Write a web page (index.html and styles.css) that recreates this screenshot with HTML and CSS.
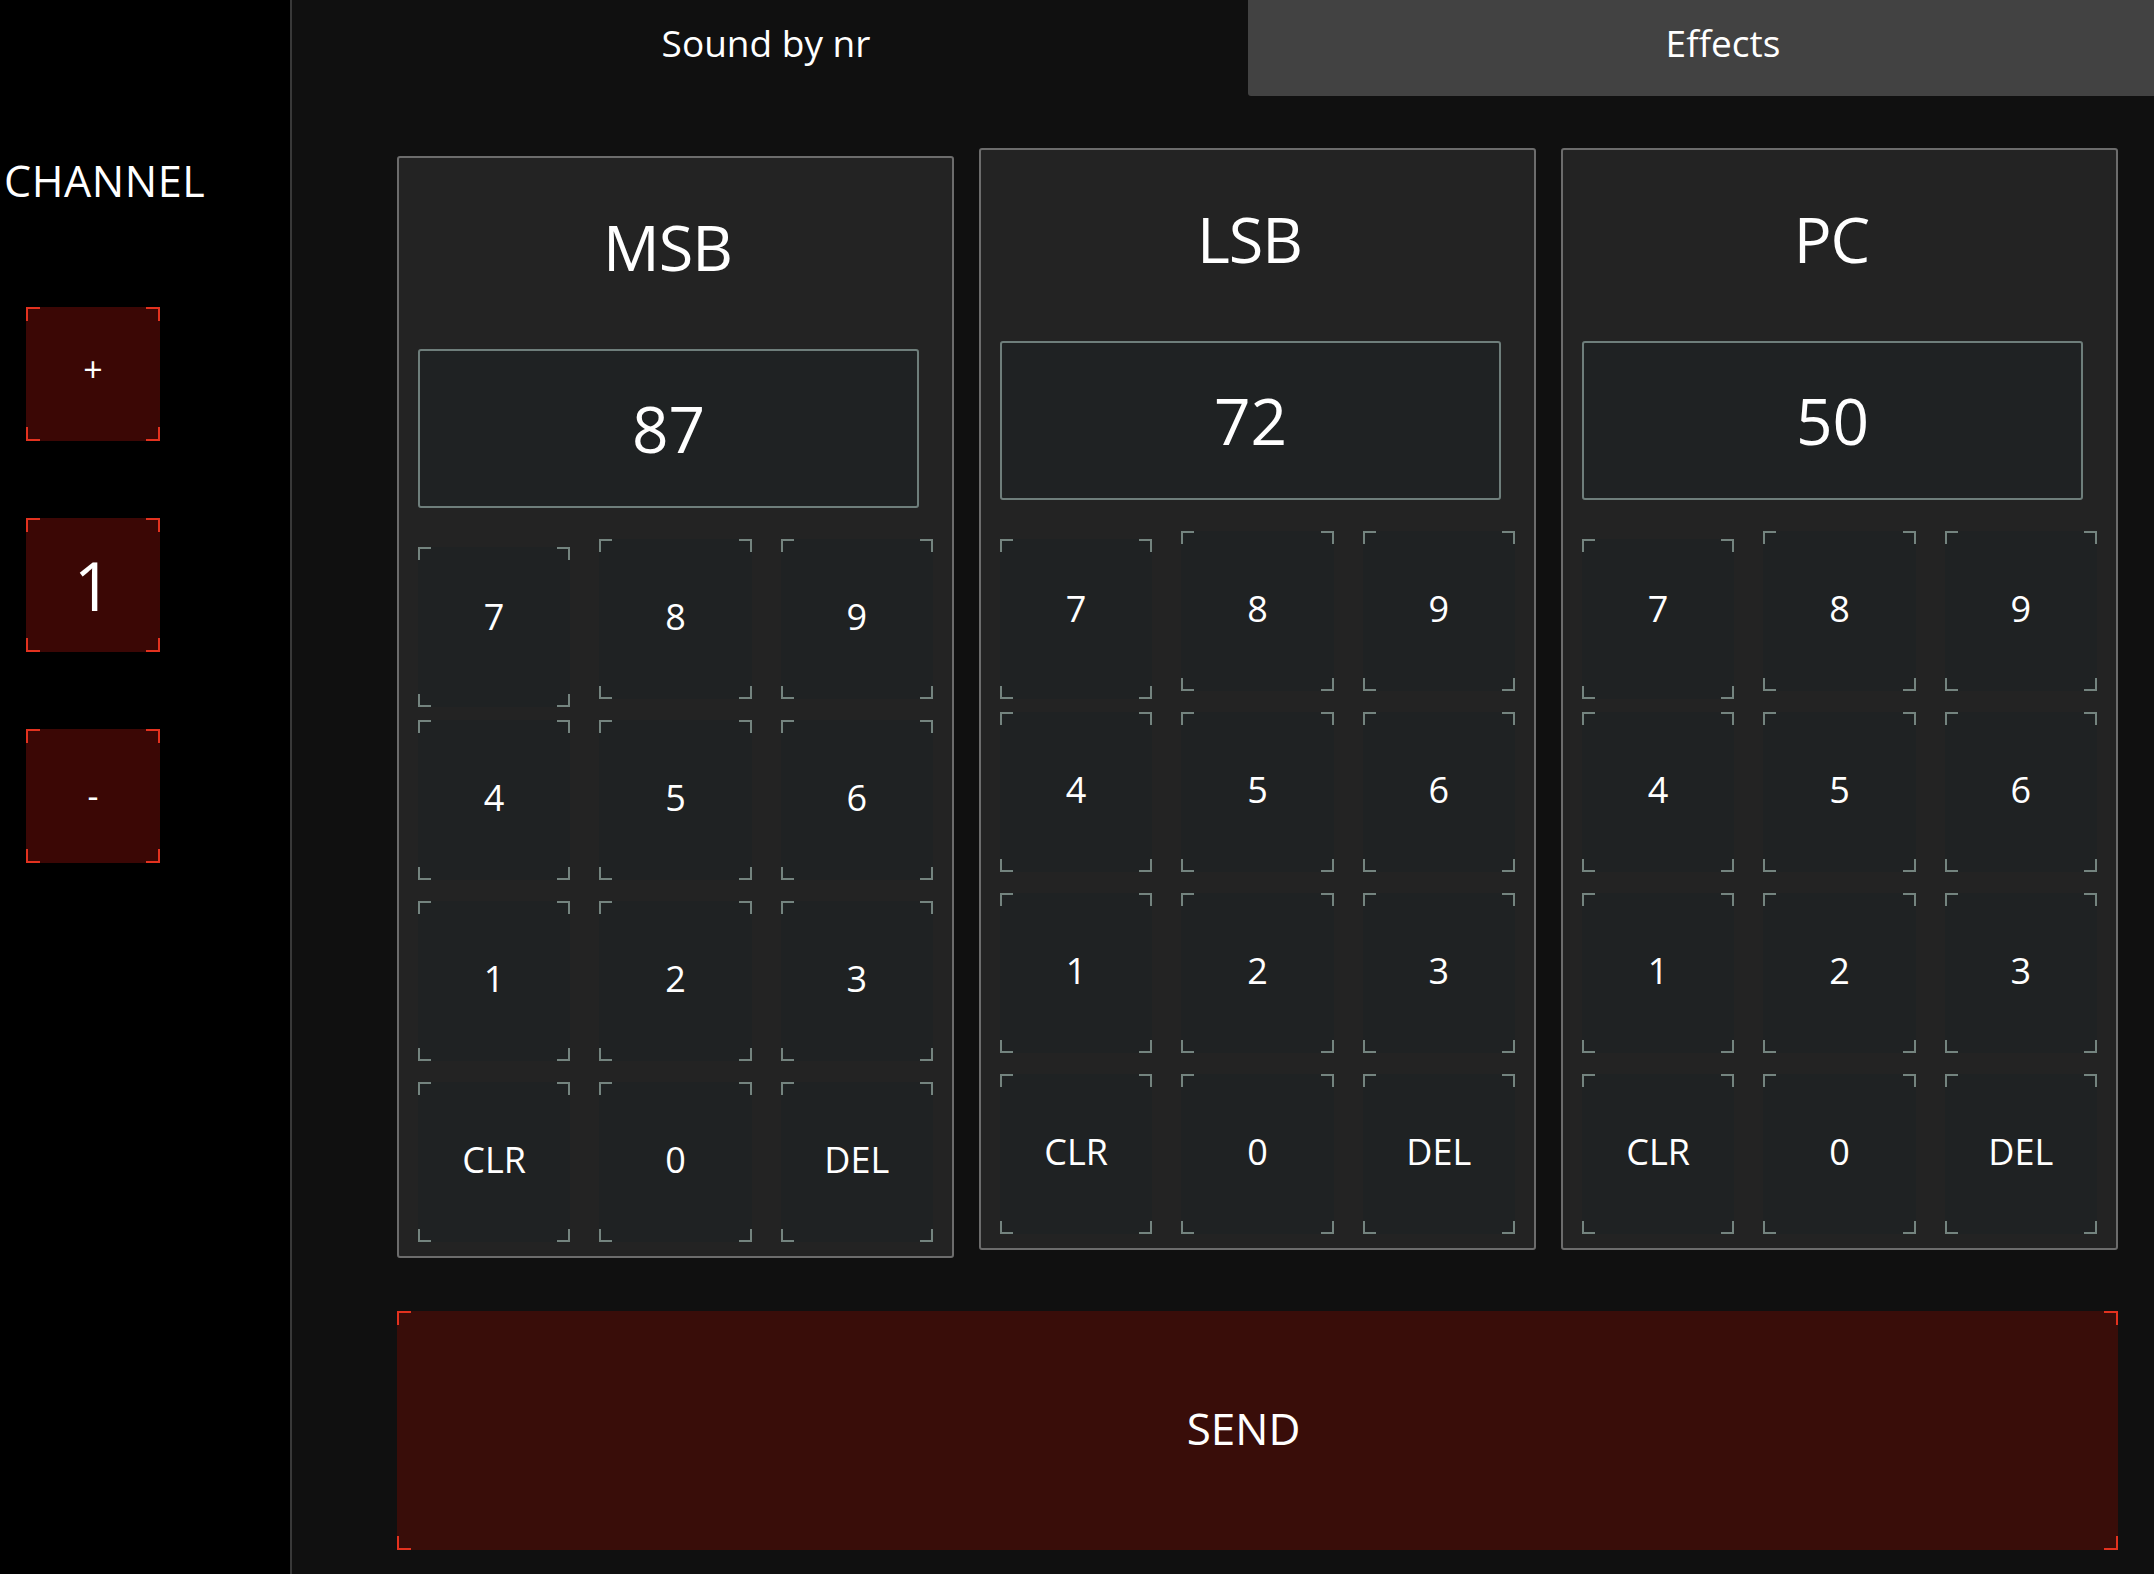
FILE: index.html
```html
<!DOCTYPE html>
<html lang="en">
<head>
<meta charset="utf-8">
<title>Sound by nr</title>
<link rel="stylesheet" href="styles.css">
</head>
<body>
<div class="app">
  <aside class="sidebar">
    <div class="channel-label">CHANNEL</div>
    <div class="channel-controls">
      <button class="ch-btn bracketed red"><span class="ch-sign ch-sign-plus">+</span></button>
      <div class="ch-btn ch-value bracketed red">1</div>
      <button class="ch-btn bracketed red"><span class="ch-sign ch-sign-minus">-</span></button>
    </div>
  </aside>
  <main class="main">
    <nav class="tabs">
      <div class="tab tab-active">Sound by nr</div>
      <div class="tab tab-inactive">Effects</div>
    </nav>
    <section class="content">
      <div class="panels">
        <div class="panel panel-pressed">
          <div class="panel-title">MSB</div>
          <div class="value-box">87</div>
          <div class="keypad">
            <div class="key bracketed key-pressed"><span>7</span></div>
            <div class="key bracketed"><span>8</span></div>
            <div class="key bracketed"><span>9</span></div>
            <div class="key bracketed"><span>4</span></div>
            <div class="key bracketed"><span>5</span></div>
            <div class="key bracketed"><span>6</span></div>
            <div class="key bracketed"><span>1</span></div>
            <div class="key bracketed"><span>2</span></div>
            <div class="key bracketed"><span>3</span></div>
            <div class="key bracketed"><span>CLR</span></div>
            <div class="key bracketed"><span>0</span></div>
            <div class="key bracketed"><span>DEL</span></div>
          </div>
        </div>
        <div class="panel">
          <div class="panel-title">LSB</div>
          <div class="value-box">72</div>
          <div class="keypad">
            <div class="key bracketed key-pressed"><span>7</span></div>
            <div class="key bracketed"><span>8</span></div>
            <div class="key bracketed"><span>9</span></div>
            <div class="key bracketed"><span>4</span></div>
            <div class="key bracketed"><span>5</span></div>
            <div class="key bracketed"><span>6</span></div>
            <div class="key bracketed"><span>1</span></div>
            <div class="key bracketed"><span>2</span></div>
            <div class="key bracketed"><span>3</span></div>
            <div class="key bracketed"><span>CLR</span></div>
            <div class="key bracketed"><span>0</span></div>
            <div class="key bracketed"><span>DEL</span></div>
          </div>
        </div>
        <div class="panel">
          <div class="panel-title">PC</div>
          <div class="value-box">50</div>
          <div class="keypad">
            <div class="key bracketed key-pressed"><span>7</span></div>
            <div class="key bracketed"><span>8</span></div>
            <div class="key bracketed"><span>9</span></div>
            <div class="key bracketed"><span>4</span></div>
            <div class="key bracketed"><span>5</span></div>
            <div class="key bracketed"><span>6</span></div>
            <div class="key bracketed"><span>1</span></div>
            <div class="key bracketed"><span>2</span></div>
            <div class="key bracketed"><span>3</span></div>
            <div class="key bracketed"><span>CLR</span></div>
            <div class="key bracketed"><span>0</span></div>
            <div class="key bracketed"><span>DEL</span></div>
          </div>
        </div>
      </div>
      <button class="send bracketed red">SEND</button>
    </section>
  </main>
</div>
</body>
</html>
```

FILE: styles.css
```css
* {
  box-sizing: border-box;
}

html, body {
  margin: 0;
  padding: 0;
  background: #101010;
}

body {
  font-family: "Open Sans", "Noto Sans", sans-serif;
  color: #ffffff;
  width: 2154px;
  height: 1574px;
  overflow: hidden;
}

button {
  font-family: inherit;
  color: inherit;
  border: none;
  padding: 0;
  margin: 0;
  cursor: pointer;
}

.app {
  display: flex;
  width: 2154px;
  height: 1574px;
}

/* ---------- corner brackets ---------- */
.bracketed {
  --bc: #74847f;
  --bl: 13px;
  --bt: 2px;
  background-image:
    linear-gradient(var(--bc), var(--bc)),
    linear-gradient(var(--bc), var(--bc)),
    linear-gradient(var(--bc), var(--bc)),
    linear-gradient(var(--bc), var(--bc)),
    linear-gradient(var(--bc), var(--bc)),
    linear-gradient(var(--bc), var(--bc)),
    linear-gradient(var(--bc), var(--bc)),
    linear-gradient(var(--bc), var(--bc));
  background-size:
    var(--bl) var(--bt), var(--bt) var(--bl),
    var(--bl) var(--bt), var(--bt) var(--bl),
    var(--bl) var(--bt), var(--bt) var(--bl),
    var(--bl) var(--bt), var(--bt) var(--bl);
  background-position:
    left top, left top,
    right top, right top,
    left bottom, left bottom,
    right bottom, right bottom;
  background-repeat: no-repeat;
}

.bracketed.red {
  --bc: #e3321f;
  --bl: 14px;
}

/* ---------- sidebar ---------- */
.sidebar {
  width: 292px;
  flex: 0 0 292px;
  background: #000000;
  border-right: 2px solid #383838;
  display: flex;
  flex-direction: column;
  padding-top: 156px;
}

.channel-label {
  font-size: 43px;
  line-height: 50px;
  padding-left: 4px;
  letter-spacing: 0.6px;
}

.channel-controls {
  margin-top: 101px;
  padding-left: 26px;
  display: flex;
  flex-direction: column;
  gap: 77px;
}

.ch-btn {
  width: 134px;
  height: 134px;
  background-color: #3b0705;
  display: flex;
  align-items: center;
  justify-content: center;
}

.ch-sign {
  font-size: 34px;
  line-height: 1;
}

.ch-sign-plus {
  padding-bottom: 10px;
}

.ch-sign-minus {
  padding-bottom: 2px;
}

.ch-value {
  font-size: 67px;
  line-height: 1;
}

/* ---------- main ---------- */
.main {
  flex: 1;
  display: flex;
  flex-direction: column;
  background: #101010;
}

.tabs {
  height: 96px;
  display: grid;
  grid-template-columns: 956px 1fr;
}

.tab {
  display: flex;
  align-items: center;
  justify-content: center;
  font-size: 37px;
  padding-bottom: 12px;
}

.tab-active {
  padding-right: 8px;
}

.tab-inactive {
  background: #424242;
  border-bottom-left-radius: 3px;
  padding-left: 44px;
}

.content {
  flex: 1;
  display: flex;
  flex-direction: column;
  padding: 52px 36px 24px 105px;
}

.panels {
  display: grid;
  grid-template-columns: repeat(3, 1fr);
  column-gap: 25px;
  height: 1102px;
}

.panel {
  background: #232323;
  border: 2px solid #6c6c6c;
  border-radius: 3px;
  padding: 0 19px 14px;
  display: flex;
  flex-direction: column;
}

.panel-pressed {
  transform: translateY(8px);
}

.panel-title {
  height: 176px;
  display: flex;
  align-items: center;
  justify-content: center;
  padding-right: 16px;
  font-size: 63px;
  letter-spacing: -1px;
  line-height: 1;
}

.value-box {
  margin-top: 15px;
  margin-right: 14px;
  height: 159px;
  background: #1f2223;
  border: 2px solid #6e7e7b;
  border-radius: 3px;
  display: flex;
  align-items: center;
  justify-content: center;
  font-size: 64px;
  line-height: 1;
}

.keypad {
  margin-top: 31px;
  display: grid;
  grid-template-columns: repeat(3, 1fr);
  grid-auto-rows: 160px;
  column-gap: 29px;
  row-gap: 21px;
}

.key {
  background-color: #1f2223;
  display: flex;
  align-items: center;
  justify-content: center;
  font-size: 36px;
  line-height: 1;
}

.key span {
  padding-bottom: 4px;
}

.key-pressed {
  transform: translateY(8px);
}

.key-pressed span {
  transform: translateY(-8px);
}

/* ---------- send ---------- */
.send {
  margin-top: 61px;
  height: 239px;
  width: 100%;
  background-color: #390d09;
  font-size: 44px;
  line-height: 1;
  display: flex;
  align-items: center;
  justify-content: center;
  padding-right: 28px;
  padding-bottom: 5px;
}
```
